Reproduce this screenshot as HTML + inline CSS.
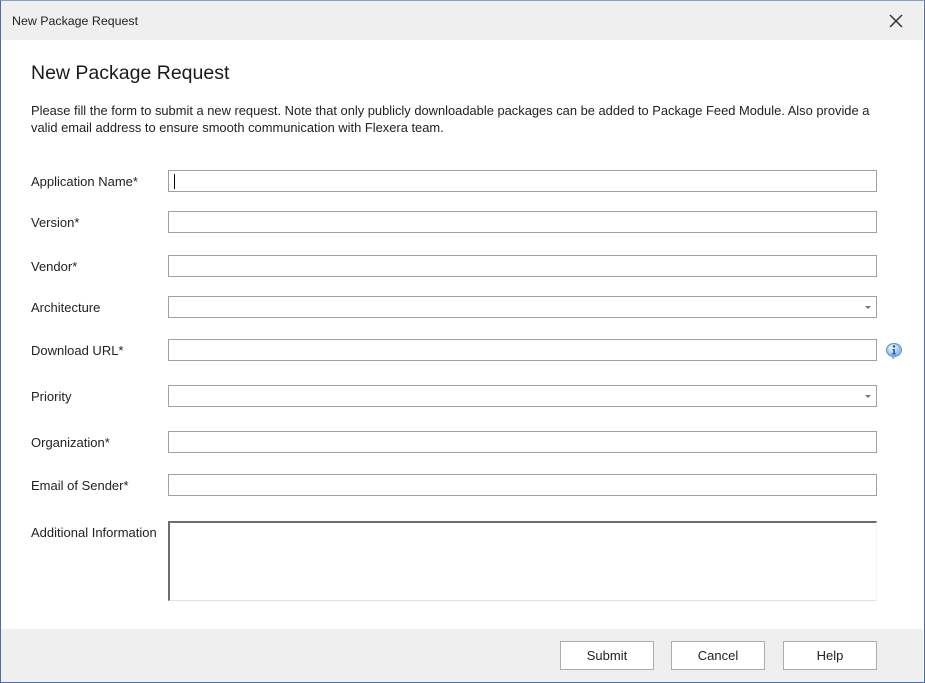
<!DOCTYPE html>
<html><head><meta charset="utf-8"><style>
*{box-sizing:border-box;margin:0;padding:0}
body{width:925px;height:683px;overflow:hidden;background:#fff;font-family:"Liberation Sans",sans-serif;font-size:13px;color:#222;position:relative}
.win{position:absolute;left:0;top:0;width:925px;height:683px;border:1px solid #4a6ea5;border-top-color:#8aa0c0}
.tb{position:absolute;left:1px;top:1px;width:922px;height:39px;background:#efefef}
.tb span{position:absolute;left:11px;top:13px;font-size:12.4px;color:#222}
.x{position:absolute;left:887px;top:12px}
h1{position:absolute;left:31px;top:62px;font-size:19.5px;font-weight:normal;color:#1a1a1a}
.desc{position:absolute;left:31px;top:102px;width:850px;line-height:17px;font-size:12.9px}
.l{position:absolute;left:31px;font-size:13px}
.f{position:absolute;left:168px;width:709px;height:22px;border:1px solid #a0a0a0;background:#fff}
.dd::after{content:"";position:absolute;right:5px;top:9px;border-left:3px solid transparent;border-right:3px solid transparent;border-top:3px solid #777}
.ta{position:absolute;left:168px;top:521px;width:709px;height:80px;border-top:2px solid #6e6e6e;border-left:2px solid #6e6e6e;border-bottom:1px solid #e0e0e0;border-right:1px solid #f4f4f4;background:#fff}
.foot{position:absolute;left:1px;top:629px;width:922px;height:53px;background:#efefef}
.b{position:absolute;top:641px;width:94px;height:29px;border:1px solid #adadad;background:#fff;text-align:center;line-height:28px;font-size:13px}
.caret{position:absolute;left:5px;top:3px;width:1px;height:15px;background:#000}
</style></head><body>
<div class="win"></div>
<div class="tb"><span>New Package Request</span>
<svg class="x" width="16" height="16" viewBox="0 0 16 16"><path d="M2 2L14 14M14 2L2 14" stroke="#333" stroke-width="1.5"/></svg></div>
<h1>New Package Request</h1>
<div class="desc">Please fill the form to submit a new request. Note that only publicly downloadable packages can be added to Package Feed Module. Also provide a<br>valid email address to ensure smooth communication with Flexera team.</div>

<div class="l" style="top:174px">Application Name*</div><div class="f" style="top:170px"><div class="caret"></div></div>
<div class="l" style="top:215px">Version*</div><div class="f" style="top:211px"></div>
<div class="l" style="top:259px">Vendor*</div><div class="f" style="top:255px"></div>
<div class="l" style="top:300px">Architecture</div><div class="f dd" style="top:296px"></div>
<div class="l" style="top:343px">Download URL*</div><div class="f" style="top:339px"></div>
<svg style="position:absolute;left:885px;top:342px" width="18" height="18" viewBox="0 0 18 18"><defs><radialGradient id="g" cx="40%" cy="35%"><stop offset="0" stop-color="#fff"/><stop offset="1" stop-color="#8fbfe8"/></radialGradient></defs><ellipse cx="9" cy="8" rx="7.5" ry="6.5" fill="url(#g)" stroke="#5b8fc7"/><path d="M7 13l1 4 3-4z" fill="#8fbfe8" stroke="#5b8fc7" stroke-width=".6"/><circle cx="9" cy="4.5" r="1.2" fill="#1b4f9a"/><path d="M7.5 7h2.3v4.3h1v1h-3.5v-1h1V8h-.8z" fill="#1b4f9a"/></svg>
<div class="l" style="top:389px">Priority</div><div class="f dd" style="top:385px"></div>
<div class="l" style="top:435px">Organization*</div><div class="f" style="top:431px"></div>
<div class="l" style="top:478px">Email of Sender*</div><div class="f" style="top:474px"></div>
<div class="l" style="top:525px">Additional Information</div><div class="ta"></div>

<div class="foot"></div>
<div class="b" style="left:560px">Submit</div>
<div class="b" style="left:671px">Cancel</div>
<div class="b" style="left:783px">Help</div>
</body></html>
